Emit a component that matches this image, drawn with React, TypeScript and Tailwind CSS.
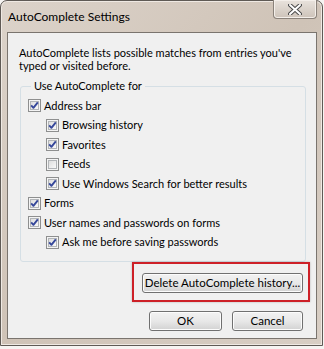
import React from 'react';

const font = { fontFamily: 'Lato, "Liberation Sans", Arial, sans-serif' };

function Check({ checked }: { checked: boolean }) {
  return (
    <svg width="13" height="13" viewBox="0 0 13 13" className="shrink-0">
      <defs>
        <linearGradient id="cbg" x1="0" y1="0" x2="1" y2="1">
          <stop offset="0" stopColor="#dcdcdc" />
          <stop offset="1" stopColor="#fbfbfb" />
        </linearGradient>
      </defs>
      <rect x="0.5" y="0.5" width="12" height="12" fill="#f4f4f4" stroke="#8e8f8f" />
      <rect x="2.5" y="2.5" width="8" height="8" fill="url(#cbg)" stroke="#b2b5b8" />
      {checked && (
        <path d="M3.2 6.4 L5.4 8.8 L9.8 3.4" fill="none" stroke="#35479a" strokeWidth="1.9" strokeLinejoin="round" />
      )}
    </svg>
  );
}

function Row({ label, checked, indent }: { label: string; checked: boolean; indent?: boolean }) {
  return (
    <div className={`flex items-center gap-[3px] h-[19.5px] ${indent ? 'pl-[18px]' : ''}`}>
      <Check checked={checked} />
      <span className="whitespace-nowrap">{label}</span>
    </div>
  );
}

function WinButton({ children, className }: { children: React.ReactNode; className?: string }) {
  return (
    <button
      className={`h-[20px] whitespace-nowrap rounded-[3px] border border-[#707070] bg-gradient-to-b from-[#f2f2f2] via-[#e8e8e8] to-[#d2d2d2] shadow-[inset_0_0_0_1px_#fcfcfc] text-[11.5px] text-black leading-none ${className ?? ''}`}
    >
      {children}
    </button>
  );
}

export default function App() {
  const rows: { label: string; checked: boolean; indent?: boolean }[] = [
    { label: 'Address bar', checked: true },
    { label: 'Browsing history', checked: true, indent: true },
    { label: 'Favorites', checked: true, indent: true },
    { label: 'Feeds', checked: false, indent: true },
    { label: 'Use Windows Search for better results', checked: true, indent: true },
    { label: 'Forms', checked: true },
    { label: 'User names and passwords on forms', checked: true },
    { label: 'Ask me before saving passwords', checked: true, indent: true },
  ];

  return (
    <div className="w-[324px] h-[349px] bg-[#f6f4f2]" style={font}>
      <div className="w-[323px] h-[346px] flex flex-col rounded-t-[7px] border border-[#5f5a55] bg-gradient-to-br from-[#dcd3ca] via-[#cfc3b7] to-[#d8cec4] shadow-[inset_0_0_0_1px_#efe9e3]">
        {/* title bar */}
        <div className="h-[31px] flex items-start justify-between pl-[7px]">
          <span className="text-[12px] text-black mt-[7px] whitespace-nowrap">AutoComplete Settings</span>
          <div className="w-[44px] h-[19px] mr-[5px] -mt-px rounded-b-[4px] border border-[#8a827a] border-t-0 bg-gradient-to-b from-[#e9e3dd] to-[#cdc3b9] shadow-[inset_0_0_0_1px_#f4efea] flex items-center justify-center">
            <svg width="14" height="11" viewBox="0 0 14 11">
              <path d="M2 1 L12 10 M12 1 L2 10" stroke="#4a4a4a" strokeWidth="4" strokeLinecap="round" />
              <path d="M2 1 L12 10 M12 1 L2 10" stroke="#ffffff" strokeWidth="2" strokeLinecap="round" />
            </svg>
          </div>
        </div>

        {/* client area */}
        <div className="flex-1 ml-[6px] mr-[5px] mb-[6px] border border-[#7a746e] bg-[#f0f0f0] flex flex-col text-[11px] text-black">
          <p className="pl-[11px] pr-[4px] pt-[13px] leading-[13px] whitespace-nowrap">
            AutoComplete lists possible matches from entries you've
            <br />
            typed or visited before.
          </p>

          <fieldset className="mt-[7px] ml-[12px] mr-[10px] border border-[#d5dfe5] rounded-[3px] pl-[7px] pb-[9px]">
            <legend className="ml-[3px] px-[3px] leading-[14px]">Use AutoComplete for</legend>
            <div className="flex flex-col pt-[3px]">
              {rows.map((r) => (
                <Row key={r.label} {...r} />
              ))}
            </div>
          </fieldset>

          <div className="flex flex-col items-end">
            <div className="mr-[6px] w-[178px] border-2 border-[#cd2027] pl-[8px] pr-[5px] pt-[9px] pb-[7px] shadow-[0_0_2px_rgba(0,0,0,0.25)]">
              <WinButton className="w-[161px]">Delete AutoComplete history...</WinButton>
            </div>
            <div className="flex gap-[10px] mt-[9px] mr-[13px]">
              <WinButton className="w-[73px]">OK</WinButton>
              <WinButton className="w-[71px]">Cancel</WinButton>
            </div>
          </div>
        </div>
      </div>
    </div>
  );
}
